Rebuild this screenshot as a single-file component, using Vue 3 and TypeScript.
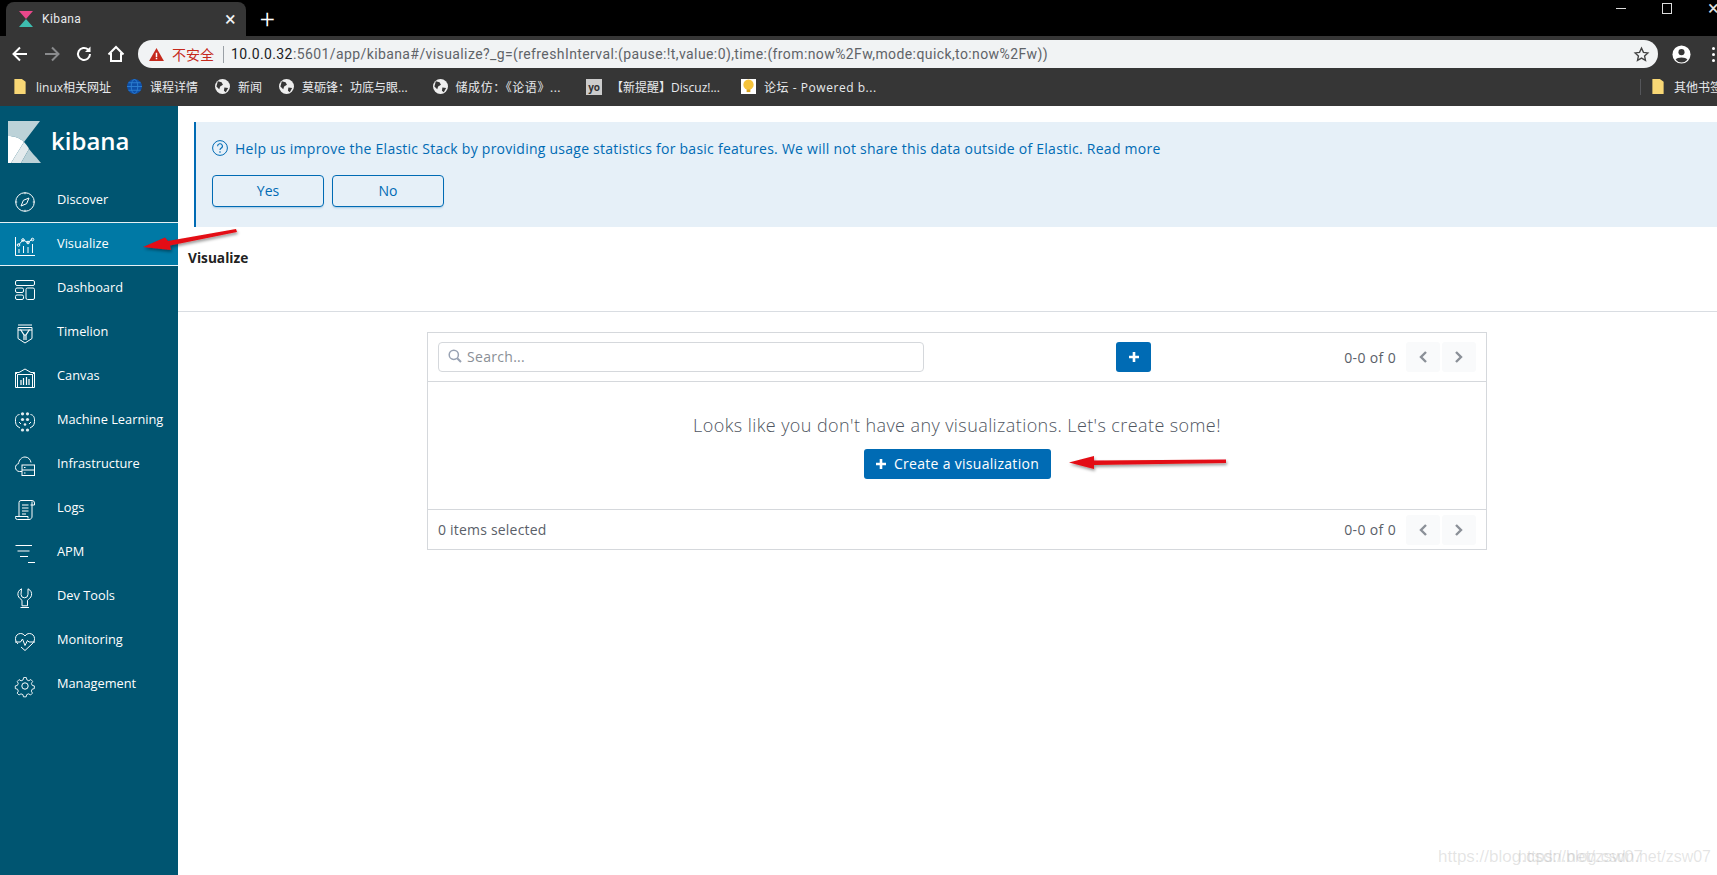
<script setup lang="ts">
interface Bookmark { label: string; icon: string; wide?: boolean; spaced?: boolean; shifted?: boolean }
const bookmarks: Bookmark[] = [
  { label: 'linux相关网址', icon: 'folder' },
  { label: '课程详情', icon: 'blue' },
  { label: '新闻', icon: 'globe' },
  { label: '莫砺锋：功底与眼...', icon: 'globe' },
  { label: '储成仿：《论语》...', icon: 'globe', wide: true, spaced: true },
  { label: '【新提醒】Discuz!...', icon: 'yo', wide: true },
  { label: '论坛 - Powered b...', icon: 'bulb', spaced: true, shifted: true }
]
const nav = ['Discover','Visualize','Dashboard','Timelion','Canvas','Machine Learning','Infrastructure','Logs','APM','Dev Tools','Monitoring','Management']
const url = '/app/kibana#/visualize?_g=(refreshInterval:(pause:!t,value:0),time:(from:now%2Fw,mode:quick,to:now%2Fw))'
</script>

<template>
  <div class="screen">
    <header class="chrome">
      <div class="tabstrip">
        <div class="tab">
          <svg class="favicon" viewBox="0 0 14 16"><path d="M0 0H14L7 8Z" fill="#e8488b"/><path d="M7 8L14 16H0Z" fill="#3ebeb0"/></svg>
          <span class="tab-title">Kibana</span>
          <span class="tab-close">×</span>
        </div>
        <span class="tab-new">+</span>
        <div class="win">
          <span class="win-min"></span>
          <span class="win-max"></span>
          <span class="win-close">×</span>
        </div>
      </div>
      <div class="toolbar">
        <svg class="tb" viewBox="0 0 20 20"><path d="M17 10H4M10 3.5L3.5 10l6.5 6.5" fill="none" stroke="#fff" stroke-width="2"/></svg>
        <svg class="tb" viewBox="0 0 20 20"><path d="M3 10H16M10 3.5l6.5 6.5-6.5 6.5" fill="none" stroke="#8a8b8d" stroke-width="2"/></svg>
        <svg class="tb" viewBox="0 0 20 20"><path d="M16 10a6 6 0 1 1-1.9-4.4" fill="none" stroke="#fff" stroke-width="2"/><path d="M16.5 2.5V8H11Z" fill="#fff"/></svg>
        <svg class="tb" viewBox="0 0 20 20"><path d="M2.5 10.5L10 3l7.5 7.5M5 9v8h10V9" fill="none" stroke="#fff" stroke-width="2"/></svg>
        <div class="omnibox">
          <svg class="warn" viewBox="0 0 16 14"><path d="M8 0L16 14H0Z" fill="#c5291c"/><path d="M7.2 5h1.6v4.6H7.2zM7.2 10.6h1.6v1.6H7.2z" fill="#fff"/></svg>
          <span class="insecure">不安全</span>
          <span class="omni-sep"></span>
          <span class="url"><span class="host">10.0.0.32</span>:5601{{ url }}</span>
          <svg class="star" viewBox="0 0 20 20"><path d="M10 2.5l2.3 5 5.2.6-3.9 3.6 1.1 5.3L10 14.300l-4.700 2.700 1.100-5.300-3.900-3.600 5.200-.6Z" fill="none" stroke="#444" stroke-width="1.600"/></svg>
        </div>
        <svg class="profile" viewBox="0 0 20 20"><circle cx="10" cy="10" r="9.500" fill="#fff"/><circle cx="10" cy="7.500" r="3.200" fill="#363636"/><path d="M3.800 15.500c1.500-3 10.900-3 12.400 0A8 8 0 0 1 3.800 15.500Z" fill="#363636"/></svg>
        <span class="dots"><i></i><i></i><i></i></span>
      </div>
      <div class="bookmarks">
        <span v-for="b in bookmarks" :key="b.label" class="bm" :class="{ wide: b.wide, spaced: b.spaced, shifted: b.shifted }">
          <svg v-if="b.icon === 'folder'" class="bm-folder" viewBox="0 0 12 16"><path d="M0 0H8L12 3V16H0Z" fill="#f8d775"/></svg>
          <svg v-else-if="b.icon === 'blue'" class="bm-ic" viewBox="0 0 16 16"><circle cx="8" cy="8" r="8" fill="#0e4fa8"/><ellipse cx="8" cy="8" rx="3.500" ry="7.500" fill="none" stroke="#2d7fd0"/><path d="M0 8H16M1.500 4H14.500M1.500 12H14.500" stroke="#2d7fd0"/></svg>
          <svg v-else-if="b.icon === 'globe'" class="bm-ic" viewBox="0 0 16 16"><circle cx="8" cy="8" r="8" fill="#eee"/><path d="M3 2.500l4 1 1.500 2.500-3 2-1 3-3-3ZM10 9l4 .5-2.500 4.500-2-1.500Z" fill="#363636"/></svg>
          <span v-else-if="b.icon === 'yo'" class="bm-yo">yo</span>
          <svg v-else class="bm-ic" viewBox="0 0 16 16"><rect width="16" height="16" fill="#fff"/><circle cx="8" cy="6" r="5.500" fill="#f5c33b"/><path d="M6 11h4v3H6Z" fill="#d9a21c"/></svg>
          <span class="bm-text">{{ b.label }}</span>
        </span>
        <span class="bm-sep"></span>
        <span class="bm bm-other">
          <svg class="bm-folder" viewBox="0 0 12 16"><path d="M0 0H8L12 3V16H0Z" fill="#f8d775"/></svg>
          <span class="bm-text">其他书签</span>
        </span>
      </div>
    </header>

    <div class="page">
      <aside class="side">
        <div class="brand">
          <svg class="logo" viewBox="0 0 33 42">
            <path d="M0 0H32L16 21C12 17 6 15 0 15Z" fill="#bcd2d8"/>
            <path d="M0 15C6 15 12 17 16 21L3 42H0Z" fill="#fff"/>
            <path d="M16 21C18 23 20 26 21 28L13 42H3Z" fill="#e4ebed"/>
            <path d="M21 28C24 32 30 38 33 42H13Z" fill="#bcd2d8"/>
          </svg>
          <span class="brand-text">kibana</span>
        </div>
        <nav class="nav">
          <div v-for="n in nav" :key="n" class="item" :class="{ on: n === 'Visualize' }">
            <svg class="ico" viewBox="0 0 20 20" fill="none" stroke="#fff" stroke-width="1">
              <template v-if="n === 'Discover'"><circle cx="10" cy="10" r="9.300"/><path d="M14 6l-2.400 5.700L6 14l2.400-5.700Z"/><path d="M10 .7v1.500M10 17.800v1.500M.7 10h1.500M17.800 10h1.500"/></template>
              <template v-else-if="n === 'Visualize'"><path d="M.5 1v18.500H20"/><path d="M3.500 9l4.500-5 5 2.500L17.500 3"/><circle cx="3.500" cy="9" r="1.300"/><circle cx="8" cy="4" r="1.300"/><circle cx="13" cy="6.500" r="1.300"/><circle cx="17.500" cy="3.500" r="1.300"/><path d="M4 13v4M8.500 10v7M13 11v6M17.500 8v9"/></template>
              <template v-else-if="n === 'Dashboard'"><rect x=".5" y=".5" width="19" height="5" rx="1.500"/><rect x=".5" y="8" width="8" height="4.500" rx="1.500"/><rect x=".5" y="15" width="8" height="4.500" rx="1.500"/><rect x="11" y="8" width="8.500" height="11.500" rx="1.500"/></template>
              <template v-else-if="n === 'Timelion'"><path d="M3 1h14M3 3.500h14v11l-7 4.500-7-4.500Z"/><path d="M5.500 5.500L9 11v5M14.500 5.500L11 11v5M9 11h2" stroke-width="1.200"/><path d="M3 6h14" /></template>
              <template v-else-if="n === 'Canvas'"><path d="M10 1l6 3.500h3.500v15H.5v-15H4Z"/><path d="M.5 4.500l2 2v13M19.500 4.500l-2 2v13M2.500 6.500h15"/><path d="M6 12v5M8.500 10v7M11.500 9v8M14 11v6" stroke-width="1.200"/></template>
              <template v-else-if="n === 'Machine Learning'"><g fill="#e3edf1" stroke="none"><circle cx="7.500" cy="1.800" r="1.600"/><circle cx="12.500" cy="1.800" r="1.600"/><circle cx="7.500" cy="7.500" r="1.600"/><circle cx="12.500" cy="7.500" r="1.600"/><circle cx="7.500" cy="18" r="1.600"/><circle cx="12.500" cy="18" r="1.600"/><circle cx="10" cy="12.500" r="1.300"/></g><path d="M4.500 2.500C1 3 .5 6 .5 8s0 4 1.500 6l3 2M15.500 2.500c3.500.5 4 3.500 4 5.500s0 4-1.500 6l-3 2M4 10l2 2M16 10l-2 2"/></template>
              <template v-else-if="n === 'Infrastructure'"><path d="M7 15.500H4.500C2 15.500.5 13.500.5 11.500c0-2 1.200-3.400 3-3.800C4 4 6.500 1 10 1s5.500 2.700 6 5.500"/><rect x="7" y="9" width="12.500" height="10.500"/><path d="M7 14h12.500M9 11.500h1.500M9 17h1.500" /></template>
              <template v-else-if="n === 'Logs'"><path d="M4 16.500V2.500A2 2 0 0 1 6 .5h11a2.500 2.500 0 0 1 2.500 2.500V5h-4M17 1.500V16a3 3 0 0 1-3 3.500H2.500A2 2 0 0 1 .5 17.500v-1h12.500v2"/><path d="M7 5h6.500M7 8h6.500M7 11h6.500M7 14h4" /></template>
              <template v-else-if="n === 'APM'"><path d="M.5 1.500h16.500M2.500 7h12M5 12.500h8M13 18.500h7" stroke-width="1.200"/></template>
              <template v-else-if="n === 'Dev Tools'"><path d="M6.500 .5C3.500 2 2.500 4.500 3 7c.5 2.500 3 4 4 5v5.500h5.500V12c1-1 3.500-2.500 4-5 .5-2.500-.5-5-3.500-6.500V6a3.500 3.500 0 0 1-7 0Z" transform="translate(0 .3)"/><path d="M5.500 19.500h8.500"/></template>
              <template v-else-if="n === 'Monitoring'"><path d="M3 12C1 10 .5 8.500.5 6.500.5 3.500 3 1.500 5.500 1.500 7.500 1.500 9 2.500 10 4c1-1.500 2.500-2.500 4.500-2.500 2.500 0 5 2 5 5 0 2-.5 3.500-2.500 5.500l-7 6.500L6 15"/><path d="M0 10h5.500l2-3 2.500 6.500 2.500-5 1.500 1.500h6"/></template>
              <template v-else><path d="M8.500.5h3l.6 2.600 2.200 1 2.300-1.400 2 2.200-1.400 2.200.9 2.200 2.400.6v3l-2.500.7-.9 2.200 1.300 2.200-2.100 2.100-2.200-1.300-2.200.9-.6 2.500h-3l-.6-2.500-2.200-.9-2.200 1.300-2.100-2.100 1.300-2.200-.9-2.200-2.500-.7v-3l2.400-.6.9-2.200L1.300 5l2-2.200 2.300 1.400 2.200-1Z" transform="translate(1.100 1.100) scale(.89)"/><circle cx="10" cy="10" r="3.200"/></template>
            </svg>
            <span>{{ n }}</span>
          </div>
        </nav>
      </aside>

      <main class="main">
        <section class="banner">
          <div class="banner-line">
            <svg class="help" viewBox="0 0 16 16"><circle cx="8" cy="8" r="7.400" fill="none" stroke="#006bb4"/><path d="M5.600 6.200A2.400 2.400 0 1 1 9 8.300c-.7.400-1 .8-1 1.700" fill="none" stroke="#006bb4" stroke-width="1.100"/><circle cx="8" cy="12" r=".8" fill="#006bb4"/></svg>
            <span>Help us improve the Elastic Stack by providing usage statistics for basic features. We will not share this data outside of Elastic. Read more</span>
          </div>
          <div class="banner-actions">
            <button class="ghost">Yes</button>
            <button class="ghost">No</button>
          </div>
        </section>
        <div class="titlebar"><h1>Visualize</h1></div>
        <section class="panel">
          <div class="panel-top">
            <div class="search">
              <svg class="mag" viewBox="0 0 14 14"><circle cx="5.800" cy="5.800" r="4.600" fill="none" stroke="#98a2b3" stroke-width="1.500"/><path d="M9.200 9.200L13 13" stroke="#98a2b3" stroke-width="2"/></svg>
              <span>Search...</span>
            </div>
            <button class="plus-btn"><svg class="plus" viewBox="0 0 12 12"><path d="M6 1v10M1 6h10" stroke="#fff" stroke-width="2.600"/></svg></button>
            <div class="pager">
              <span>0-0 of 0</span>
              <span class="pg"><svg viewBox="0 0 10 14"><path d="M8 2L3 7l5 5" fill="none" stroke="#8b9098" stroke-width="2.400"/></svg></span>
              <span class="pg"><svg viewBox="0 0 10 14"><path d="M2 2l5 5-5 5" fill="none" stroke="#8b9098" stroke-width="2.400"/></svg></span>
            </div>
          </div>
          <div class="panel-body">
            <p>Looks like you don't have any visualizations. Let's create some!</p>
            <button class="create"><svg class="plus" viewBox="0 0 12 12"><path d="M6 1v10M1 6h10" stroke="#fff" stroke-width="2.600"/></svg><span>Create a visualization</span></button>
          </div>
          <div class="panel-foot">
            <span>0 items selected</span>
            <div class="pager">
              <span>0-0 of 0</span>
              <span class="pg"><svg viewBox="0 0 10 14"><path d="M8 2L3 7l5 5" fill="none" stroke="#8b9098" stroke-width="2.400"/></svg></span>
              <span class="pg"><svg viewBox="0 0 10 14"><path d="M2 2l5 5-5 5" fill="none" stroke="#8b9098" stroke-width="2.400"/></svg></span>
            </div>
          </div>
        </section>
      </main>
    </div>

    <svg class="arrows" viewBox="0 0 1717 875">
      <defs><filter id="sh" x="-20%" y="-100%" width="140%" height="300%"><feDropShadow dx="1" dy="2" stdDeviation="1.500" flood-color="#000" flood-opacity=".4"/></filter></defs>
      <g fill="#e30c12" filter="url(#sh)">
        <path d="M143 247L165 237.500 168 241 236 229 237 232 170 245.500 171 250Z"/>
        <path d="M1069 462.500L1094 456 1094 460.500 1226 459.500V463L1094 465 1094 469Z"/>
      </g>
    </svg>
    <div class="mark"><span>https://blog.csdn.net/zsw07</span><span class="mark2">https://blog.csdn.net/zsw07</span></div>
  </div>
</template>

<style>
html, body { margin: 0; background: #fff; overflow: hidden; }
</style>

<style scoped>
.screen { position: relative; width: 1717px; height: 875px; overflow: hidden; font-family: "Open Sans", sans-serif; background: #fff; display: flex; flex-direction: column; }
.chrome { flex: none; height: 106px; background: #363636; display: flex; flex-direction: column; font-family: Roboto, "Noto Sans CJK SC", sans-serif; color: #e8eaed; }
.tabstrip { height: 36px; background: #000; display: flex; align-items: flex-end; position: relative; }
.tab { width: 240px; height: 34px; margin-left: 6px; background: #363636; border-radius: 8px 8px 0 0; display: flex; align-items: center; box-sizing: border-box; padding: 0 10px 0 13px; font-size: 12px; letter-spacing: .4px; }
.favicon { width: 14px; height: 16px; margin-right: 9px; }
.tab-title { flex: 1; }
.tab-close { font-size: 20px; line-height: 1; color: #f1f3f4; }
.tab-new { color: #fff; font-size: 26px; line-height: 1; margin: 0 0 4px 14px; font-weight: 300; }
.win { position: absolute; top: 3px; right: -5px; display: flex; align-items: flex-start; color: #ddd; }
.win-min { width: 10px; height: 1px; background: #ddd; margin: 5px 36px 0 0; }
.win-max { width: 8px; height: 9px; border: 1px solid #ddd; margin-right: 36px; }
.win-close { font-size: 20px; line-height: 10px; width: 14px; }
.toolbar { height: 32px; padding: 2px 0 0 10px; display: flex; align-items: center; }
.tb { width: 20px; height: 20px; margin-right: 12px; flex: none; }
.omnibox { width: 1520px; height: 28px; background: #f1f3f4; border-radius: 14px; display: flex; align-items: center; box-sizing: border-box; padding: 0 8px 0 11px; font-size: 14px; color: #5f6368; white-space: nowrap; overflow: hidden; }
.warn { width: 15px; height: 13px; margin-right: 8px; flex: none; }
.insecure { color: #c5291c; font-size: 14px; }
.omni-sep { width: 1px; height: 17px; background: #9aa0a6; margin: 0 7px 0 9px; flex: none; }
.url { flex: 1; overflow: hidden; letter-spacing: .4px; }
.host { color: #202124; }
.star { width: 17px; height: 17px; flex: none; }
.profile { width: 19px; height: 19px; margin-left: 14px; flex: none; }
.dots { display: flex; flex-direction: column; gap: 3px; margin-left: 21px; }
.dots i { width: 3px; height: 3px; border-radius: 50%; background: #fff; }
.bookmarks { flex: 1; display: flex; align-items: center; padding: 0 0 3px 14px; font-family: "Open Sans", "Noto Sans CJK SC", sans-serif; font-size: 12px; white-space: nowrap; overflow: hidden; }
.bm { display: flex; align-items: center; margin-right: 17px; flex: none; }
.bm:first-child { margin-right: 16px; }
.bm.wide { margin-left: 8px; }
.bm.spaced { letter-spacing: .55px; }
.bm.shifted { margin-left: 4px; }
.bm-folder { width: 12px; height: 15px; margin-right: 10px; flex: none; }
.bm-ic { width: 15px; height: 15px; margin-right: 8px; flex: none; }
.bm-yo { width: 16px; height: 16px; margin-right: 9px; background: #ccc; color: #333; font-size: 10px; line-height: 16px; text-align: center; font-weight: 700; letter-spacing: 0; }
.bm-text { color: #e8eaed; }
.bm-sep { width: 1px; height: 16px; background: #55565a; margin-left: auto; margin-right: 11px; flex: none; }
.bm-other { margin-right: -5px; }
.page { flex: 1; display: flex; min-height: 0; }
.side { width: 178px; flex: none; background: #005571; color: #fff; display: flex; flex-direction: column; }
.brand { height: 72px; display: flex; align-items: center; padding: 0 0 0 8px; box-sizing: border-box; }
.logo { width: 33px; height: 42px; margin: 0 10px 0 0; }
.brand-text { font-size: 24px; font-weight: 600; line-height: 1; margin-bottom: 2px; color: #fff; }
.nav { display: flex; flex-direction: column; }
.item { height: 44px; box-sizing: border-box; display: flex; align-items: center; padding-left: 15px; font-size: 12.800px; color: #fff; }
.item.on { background: #0079a5; border-top: 1px solid #e6f1f5; border-bottom: 1px solid #e6f1f5; }
.ico { width: 20px; height: 20px; margin-right: 22px; flex: none; margin-top: 4px; overflow: visible; }
.item span { position: relative; top: -1px; }
.main { flex: 1; min-width: 0; display: flex; flex-direction: column; }
.banner { margin: 16px 0 0 16px; height: 105px; box-sizing: border-box; background: #e6f0f8; border-left: 2px solid #006bb4; padding: 15px 0 0 16px; color: #006bb4; font-size: 14px; }
.banner-line { display: flex; align-items: center; height: 22px; white-space: nowrap; letter-spacing: .25px; }
.help { width: 16px; height: 16px; margin-right: 7px; flex: none; }
.banner-actions { display: flex; gap: 8px; margin-top: 16px; }
.ghost { width: 112px; height: 32px; box-sizing: border-box; background: #e6f0f8; border: 1px solid #006bb4; border-radius: 4px; color: #006bb4; font: 14px/28px "Open Sans", sans-serif; padding: 0; box-shadow: 0 2px 2px -1px rgba(0,107,180,.3); }
.titlebar { height: 85px; box-sizing: border-box; padding: 20px 0 0 10px; border-bottom: 1px solid #d9dde2; }
h1 { margin: 0; font-size: 13.700px; font-weight: 700; line-height: 22px; color: #222; }
.panel { width: 1060px; box-sizing: border-box; height: 218px; margin: 20px 0 0 249px; border: 1px solid #d5d8dc; display: flex; flex-direction: column; color: #5a6069; font-size: 14px; }
.panel-top { height: 49px; flex: none; box-sizing: border-box; border-bottom: 1px solid #d5d8dc; display: flex; align-items: center; padding: 0 10px; position: relative; }
.search { width: 486px; height: 30px; box-sizing: border-box; border: 1px solid #d5d8dc; border-radius: 4px; display: flex; align-items: center; padding: 0 0 2px 9px; color: #8a8f96; font-size: 14px; letter-spacing: .3px; }
.mag { width: 14px; height: 14px; margin-right: 5px; }
.plus-btn { width: 35px; height: 30px; margin-left: 192px; border: 0; border-radius: 3px; background: #006bb4; padding: 0; display: flex; align-items: center; justify-content: center; }
.plus { width: 12px; height: 12px; flex: none; }
.pager { margin-left: auto; display: flex; align-items: center; gap: 2px; }
.pager > span:first-child { margin-right: 8px; letter-spacing: .35px; }
.pg { width: 34px; height: 30px; background: #f9fafb; display: flex; align-items: center; justify-content: center; border-radius: 3px; }
.pg svg { width: 10px; height: 14px; }
.panel-body { flex: 1; display: flex; flex-direction: column; align-items: center; }
.panel-body p { margin: 30px 0 0; font-size: 18px; font-weight: 300; line-height: 26px; color: #4f5661; letter-spacing: .41px; }
.create { width: 187px; height: 30px; margin-top: 11px; border: 0; border-radius: 3px; background: #006bb4; color: #fff; font: 14px "Open Sans", sans-serif; letter-spacing: .3px; display: flex; align-items: center; justify-content: center; gap: 7px; padding: 0; }
.create span { position: relative; top: -1px; }
.panel-foot { height: 40px; flex: none; box-sizing: border-box; border-top: 1px solid #d5d8dc; display: flex; align-items: center; padding: 0 10px; }
.panel-foot > span { letter-spacing: .2px; }
.arrows { position: absolute; left: 0; top: 0; width: 1717px; height: 875px; pointer-events: none; }
.mark { position: absolute; left: 1438px; top: 847px; width: 270px; font: 17px "Liberation Sans", sans-serif; color: rgba(160,160,160,.28); white-space: nowrap; }
.mark2 { position: absolute; left: 80px; top: 1px; font-size: 16px; }
</style>
